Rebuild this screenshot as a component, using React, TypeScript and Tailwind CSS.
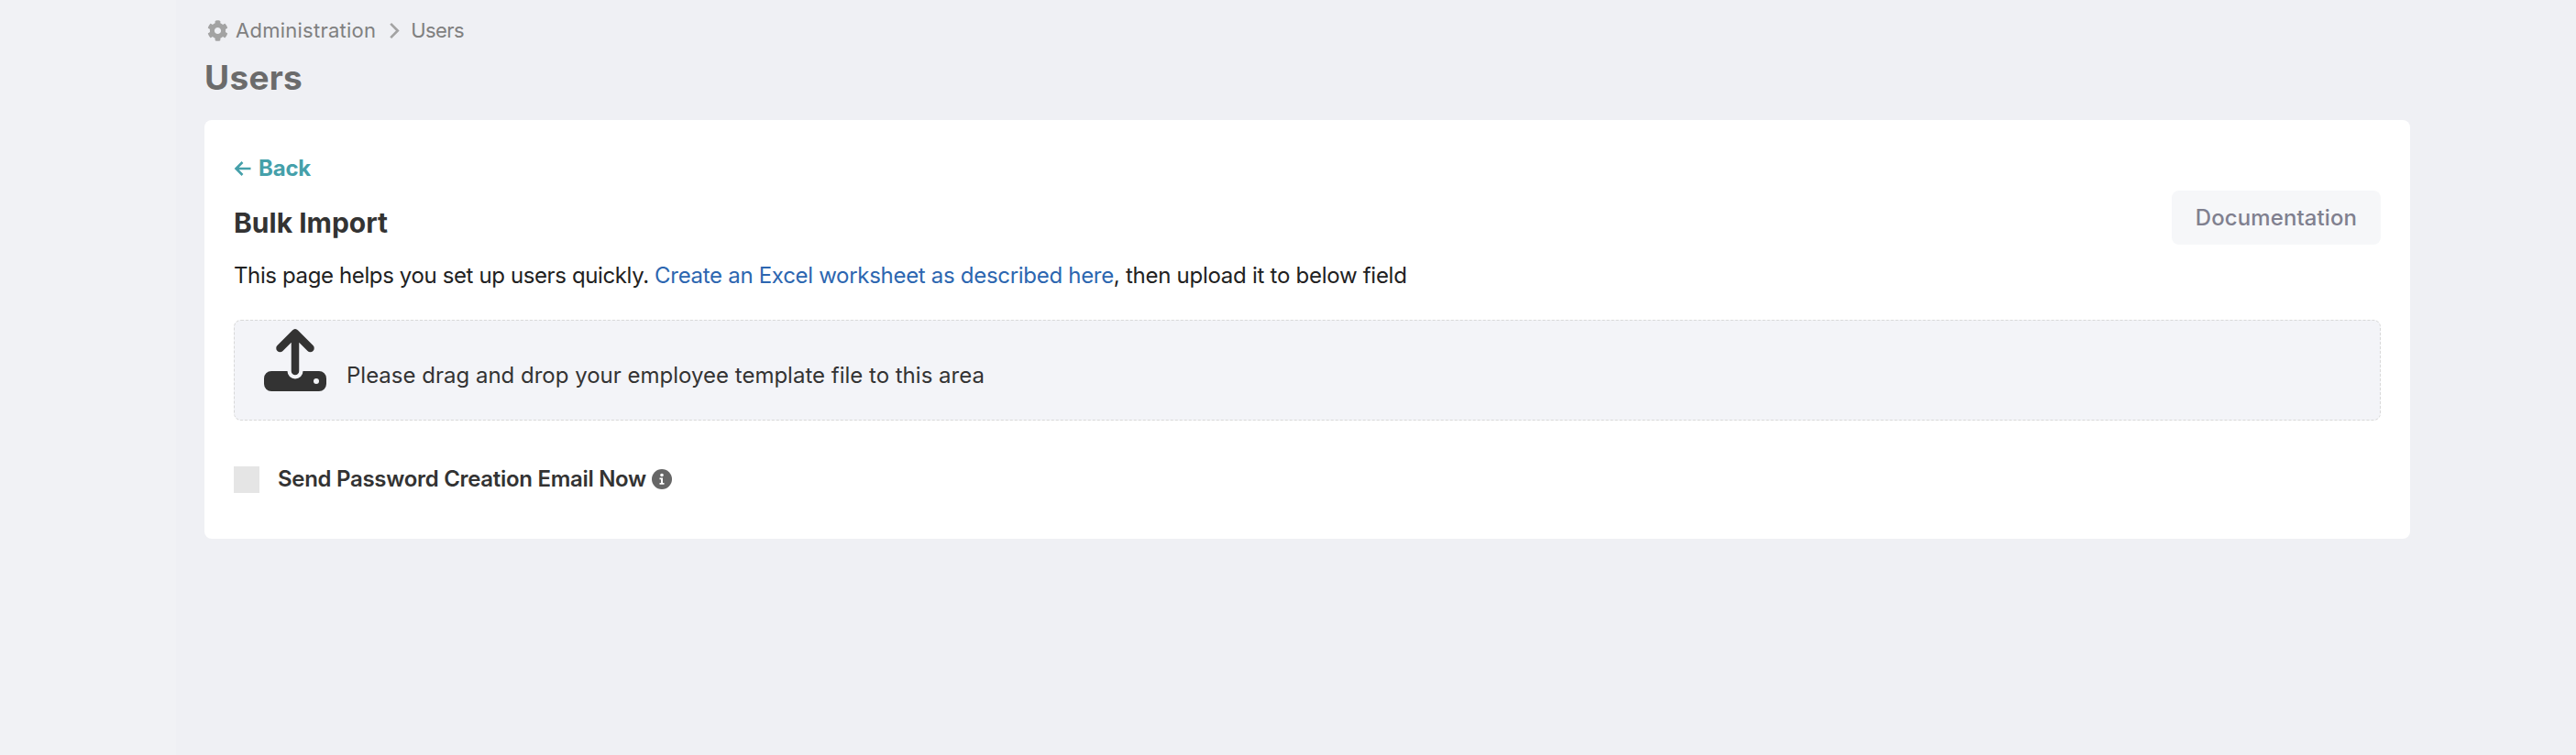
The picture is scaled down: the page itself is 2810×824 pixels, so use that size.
const font = "font-['Inter','Liberation_Sans',sans-serif]";

function UploadIcon() {
  return (
    <svg viewBox="0 0 68 68" width={68} height={68} aria-hidden="true">
      <path
        d="M8 46h17.500a8.500 8.500 0 0 0 17 0H60a8 8 0 0 1 8 8v6a8 8 0 0 1-8 8H8a8 8 0 0 1-8-8v-6a8 8 0 0 1 8-8z"
        fill="#333333"
      />
      <circle cx="57" cy="57" r="3" fill="#f3f4f8" />
      <path
        d="M34 46V4.500M17.500 21 34 4.500 50.500 21"
        fill="none"
        stroke="#333333"
        strokeWidth="8.500"
        strokeLinecap="round"
        strokeLinejoin="round"
      />
    </svg>
  );
}

function GearIcon() {
  return (
    <svg viewBox="0 0 512 512" width={23} height={23} fill="#a3a3a3" aria-hidden="true">
      <path d="M487.400 315.700l-42.600-24.600c4.300-23.200 4.300-47 0-70.200l42.600-24.600c4.900-2.800 7.100-8.600 5.500-14-11.100-35.600-30-67.800-54.700-94.600-3.800-4.100-10-5.100-14.800-2.300L380.800 110c-17.900-15.400-38.500-27.300-60.800-35.100V25.800c0-5.600-3.900-10.500-9.400-11.700-36.700-8.200-74.300-7.800-109.200 0-5.500 1.200-9.400 6.100-9.400 11.700V75c-22.200 7.900-42.800 19.800-60.800 35.100L88.700 85.500c-4.900-2.800-11-1.900-14.800 2.300-24.700 26.700-43.600 58.900-54.700 94.600-1.700 5.400.6 11.200 5.500 14L67.300 221c-4.300 23.200-4.300 47 0 70.200l-42.600 24.600c-4.900 2.800-7.100 8.600-5.500 14 11.100 35.600 30 67.800 54.700 94.600 3.800 4.100 10 5.100 14.800 2.300l42.600-24.600c17.900 15.400 38.500 27.300 60.800 35.100v49.200c0 5.600 3.900 10.500 9.400 11.700 36.700 8.200 74.300 7.800 109.200 0 5.500-1.200 9.400-6.100 9.400-11.700v-49.200c22.200-7.900 42.800-19.800 60.800-35.100l42.600 24.600c4.900 2.800 11 1.900 14.800-2.300 24.700-26.700 43.600-58.900 54.700-94.600 1.500-5.500-.7-11.300-5.600-14.100zM256 336c-44.100 0-80-35.900-80-80s35.900-80 80-80 80 35.900 80 80-35.900 80-80 80z" />
    </svg>
  );
}

function InfoIcon() {
  return (
    <svg viewBox="0 0 22 22" width={22} height={22} aria-hidden="true">
      <circle cx="11" cy="11" r="11" fill="#666666" />
      <circle cx="11" cy="6.500" r="1.800" fill="#ffffff" />
      <path d="M8.500 9.500H12V15h1.500v1.700h-5V15H10v-3.800H8.500z" fill="#ffffff" />
    </svg>
  );
}

export default function App() {
  return (
    <div className={`flex min-h-[824px] bg-[#eff0f4] ${font}`}>
      {/* sidebar gutter */}
      <div className="w-[192px] shrink-0 bg-[#f1f2f5]" />

      <main className="flex-1 pl-[31px] pr-[181px]">
        {/* Breadcrumb */}
        <div className="flex h-[65px] items-center pt-[1px] text-[22px] text-[#808080]">
          <span className="ml-[3px] mr-[8px] flex"><GearIcon /></span>
          <span className="tracking-[0.25px]">Administration</span>
          <svg viewBox="0 0 12 20" width={12} height={19} className="ml-[14px] mr-[12px]" aria-hidden="true">
            <path d="M2 2l8 8-8 8" fill="none" stroke="#a3a3a3" strokeWidth="2.800" />
          </svg>
          <span className="tracking-[-0.6px]">Users</span>
        </div>

        <h1 className="h-[66px] text-[37px] leading-[40px] tracking-[0.3px] font-bold text-[#6b6b6b]">Users</h1>

        {/* Card */}
        <div className="h-[457px] rounded-[8px] bg-white px-[32px] pt-[37px]">
          <a className="flex items-center gap-[7px] text-[24px] leading-[32px] tracking-[-0.2px] font-bold text-[#45a0aa]">
            <svg viewBox="0 0 20 20" width={20} height={20} aria-hidden="true">
              <path d="M18.500 10H2.500M9.500 3l-7 7 7 7" fill="none" stroke="#45a0aa" strokeWidth="2.600" />
            </svg>
            Back
          </a>

          <div className="mt-[8px] flex items-start justify-between">
            <h2 className="pt-[17px] text-[30px] leading-[36px] font-bold text-[#333333]">Bulk Import</h2>
            <button className="h-[59px] w-[228px] rounded-[8px] bg-[#f6f7f9] text-[24px] tracking-[0.1px] font-medium text-[#80808f]">
              Documentation
            </button>
          </div>

          <p className="mt-[16px] text-[24px] leading-[36px] tracking-[-0.38px] text-[#212121]">
            This page helps you set up users quickly.{" "}
            <a className="tracking-[-0.3px] text-[#2c66b0]">Create an Excel worksheet as described here</a>
            <span className="tracking-[-0.27px]">, then upload it to below field</span>
          </p>

          {/* Drop zone */}
          <div className="mt-[30px] flex h-[110px] items-center rounded-[8px] border border-dashed border-[#d8d8d8] bg-[#f3f4f8] pl-[32px]">
            <span className="-mt-[23px] flex"><UploadIcon /></span>
            <span className="ml-[22px] mt-[12px] text-[24px] text-[#333333]">
              Please drag and drop your employee template file to this area
            </span>
          </div>

          {/* Checkbox */}
          <label className="mt-[46px] flex items-center">
            <span className="h-[29px] w-[28px] bg-[#e5e5e5]" />
            <span className="ml-[20px] text-[24px] tracking-[-0.3px] font-semibold text-[#333333]">Send Password Creation Email Now</span>
            <span className="ml-[6px] flex"><InfoIcon /></span>
          </label>
        </div>
      </main>
    </div>
  );
}
